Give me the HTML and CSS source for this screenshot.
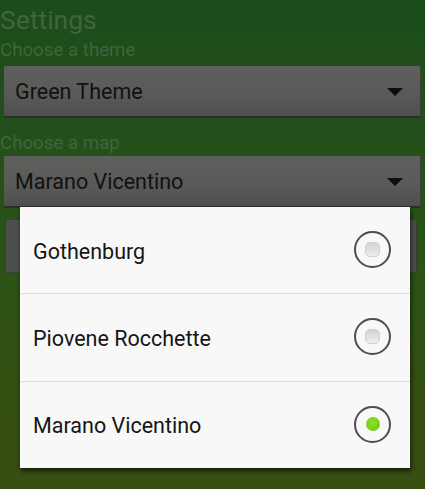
FILE: index.html
```html
<!DOCTYPE html>
<html>
<head>
<meta charset="utf-8">
<link rel="stylesheet" href="styles.css">
</head>
<body>
<div class="screen">
  <div class="title">Settings</div>
  <div class="label label-theme">Choose a theme</div>
  <div class="spinner">
    <span class="spinner-text">Green Theme</span>
    <svg class="arrow" width="16" height="8" viewBox="0 0 16 8"><polygon points="0,0 16,0 8,8" fill="#0d0d0d"/></svg>
  </div>
  <div class="label label-map">Choose a map</div>
  <div class="spinner">
    <span class="spinner-text">Marano Vicentino</span>
    <svg class="arrow" width="16" height="8" viewBox="0 0 16 8"><polygon points="0,0 16,0 8,8" fill="#0d0d0d"/></svg>
  </div>
  <div class="button"></div>
</div>
<div class="dialog">
  <div class="row">
    <span class="row-text">Gothenburg</span>
    <span class="radio"><span class="dot"></span></span>
  </div>
  <div class="row">
    <span class="row-text">Piovene Rocchette</span>
    <span class="radio"><span class="dot"></span></span>
  </div>
  <div class="row">
    <span class="row-text">Marano Vicentino</span>
    <span class="radio"><span class="dot checked"></span></span>
  </div>
</div>
</body>
</html>
```
FILE: styles.css
```css
html, body {
  margin: 0;
  padding: 0;
  width: 425px;
  height: 489px;
  overflow: hidden;
}
body {
  position: relative;
  font-family: Roboto, "Noto Sans", sans-serif;
  background: linear-gradient(to bottom, #1b4c1b 0%, #24501a 30%, #2c5316 55%, #344f12 80%, #394e12 100%);
}
.screen {
  display: flex;
  flex-direction: column;
  height: 489px;
}
.title {
  font-size: 26.5px;
  line-height: 30px;
  padding-top: 5px;
  color: #3f653c;
  height: 36px;
  box-sizing: border-box;
}
.label {
  font-size: 18.7px;
  line-height: 22px;
  color: #3e663a;
}
.label-theme {
  margin-top: 3px;
  height: 27px;
}
.label-map {
  margin-top: 14px;
  height: 24px;
}
.spinner {
  margin: 0 4px;
  height: 52px;
  box-sizing: border-box;
  background: linear-gradient(to bottom, #5f5f5d 0%, #595957 60%, #4f4f4e 100%);
  border-bottom: 2px solid #2c2c2a;
  border-right: 1px solid #3e3e3c;
  display: flex;
  align-items: center;
  padding: 0 17px 0 11px;
}
.spinner-text {
  flex: 1;
  font-size: 21.5px;
  color: #111;
}
.arrow {
  display: block;
  margin-top: 2px;
}
.button {
  margin: 11px 8px 0 5px;
  height: 54px;
  background: #4c4f4a;
  border: 1px solid #3a3d38;
  box-sizing: border-box;
}
.dialog {
  position: absolute;
  left: 20px;
  top: 207px;
  width: 390px;
  height: 261px;
  background: #f8f8f8;
  box-shadow: 1px 3px 5px rgba(0,0,0,0.65);
  display: flex;
  flex-direction: column;
}
.row {
  flex: 1;
  display: flex;
  align-items: center;
  padding: 2px 19px 0 13px;
  border-top: 1px solid #dddddd;
}
.row:first-child {
  border-top: none;
}
.row-text {
  flex: 1;
  font-size: 21.5px;
  color: #151515;
}
.radio {
  width: 33px;
  height: 33px;
  border: 2px solid #4e4e4e;
  border-radius: 50%;
  display: flex;
  align-items: center;
  justify-content: center;
  margin-top: -3px;
}
.dot {
  width: 13px;
  height: 13px;
  border-radius: 5px;
  background: linear-gradient(to bottom, #d2d2d2, #ededed);
  border: 1px solid #cfcfcf;
}
.dot.checked {
  width: 14px;
  height: 14px;
  border-radius: 50%;
  border: none;
  background: radial-gradient(circle at 45% 40%, #8ee02a 0%, #76cc18 70%, #62b012 100%);
}
```
